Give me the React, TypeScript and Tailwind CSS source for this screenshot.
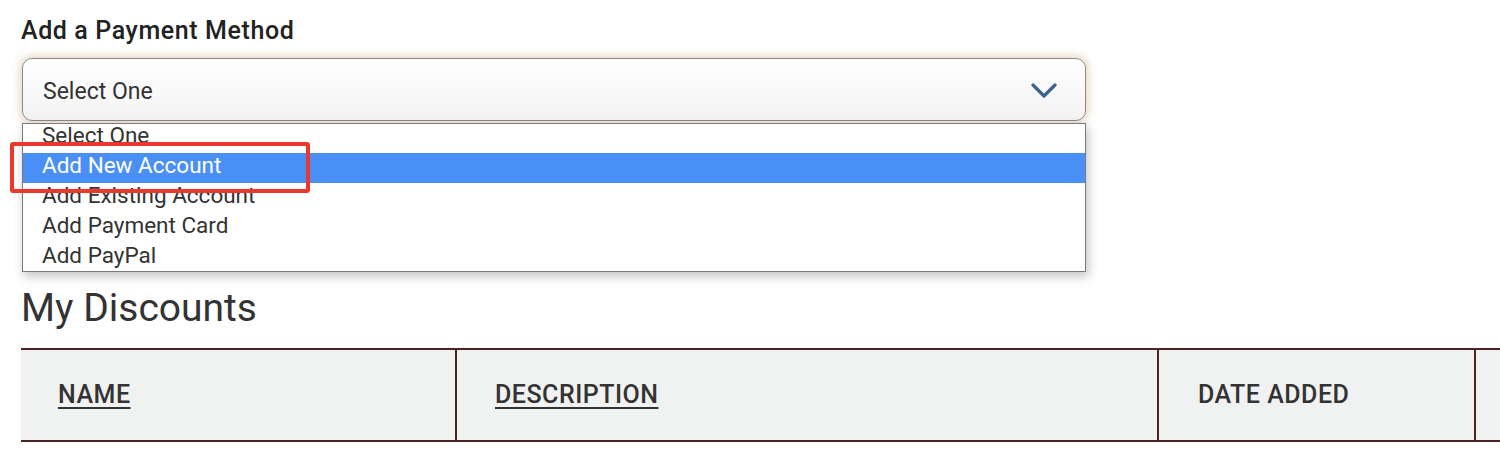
import React from "react";

const options = [
  "Select One",
  "Add New Account",
  "Add Existing Account",
  "Add Payment Card",
  "Add PayPal",
];

export default function App() {
  return (
    <div className="relative w-[1500px] h-[452px] overflow-hidden bg-white font-['Roboto',sans-serif] text-[#333]">
      <div className="pl-[21px] pt-[17px]">
        {/* Payment method select */}
        <label className="block text-[25px] leading-[28px] font-medium tracking-[0.6px] text-[#222]">
          Add a Payment Method
        </label>
        <div className="relative mt-[13px] ml-px w-[1064px]">
          <div className="flex h-[63px] items-center justify-between rounded-[10px] border border-[#8a8a8a] bg-gradient-to-b from-white to-[#f3f3f3] pl-[20px] pr-[28px] shadow-[0_0_8px_2px_rgba(205,160,110,0.45)]">
            <span className="pt-[6px] text-[23px] text-[#333]">Select One</span>
            <svg width="26" height="16" viewBox="0 0 26 16" fill="none" className="mt-[2px]">
              <path
                d="M2 2 L13 13 L24 2"
                stroke="#3f6389"
                strokeWidth="3.2"
                strokeLinecap="round"
                strokeLinejoin="round"
              />
            </svg>
          </div>

          {/* Open dropdown list */}
          <div className="absolute left-0 top-[65px] z-10 h-[149px] w-[1064px] overflow-hidden border border-[#7a7a7a] bg-white shadow-[2px_4px_10px_rgba(0,0,0,0.25)]">
            <ul className="-mt-[1px]">
              {options.map((o, i) => (
                <li
                  key={o}
                  className={
                    i === 1
                      ? "h-[30px] pl-[19px] text-[22.5px] leading-[25px] bg-[#4a8ff5] text-white"
                      : "h-[30px] pl-[19px] text-[22.5px] leading-[25px] text-[#333]"
                  }
                >
                  {o}
                </li>
              ))}
            </ul>
          </div>

          {/* highlight annotation */}
          <div className="absolute left-[-12px] top-[84px] z-20 h-[51px] w-[300px] rounded-[3px] border-[4px] border-[#e8392c]" />
        </div>

        {/* Discounts */}
        <h2 className="mt-[168px] text-[39px] leading-[39px] font-normal text-[#333]">
          My Discounts
        </h2>
        <table className="mt-[20px] w-[1560px] border-collapse">
          <thead>
            <tr className="h-[92px] bg-[#f0f1f1] border-y-2 border-[#4d2424]">
              <th className="w-[435px] pl-[37px] text-left text-[25px] font-medium tracking-[0.5px]">
                <span className="underline underline-offset-[4px]">NAME</span>
              </th>
              <th className="w-[702px] border-l-2 border-[#4d2424] pl-[38px] text-left text-[25px] font-medium tracking-[0.5px]">
                <span className="underline underline-offset-[4px]">DESCRIPTION</span>
              </th>
              <th className="w-[317px] border-l-2 border-[#4d2424] pl-[39px] text-left text-[25px] font-medium tracking-[0.5px]">
                DATE ADDED
              </th>
              <th className="border-l-2 border-[#4d2424]"></th>
            </tr>
          </thead>
        </table>
      </div>
    </div>
  );
}
